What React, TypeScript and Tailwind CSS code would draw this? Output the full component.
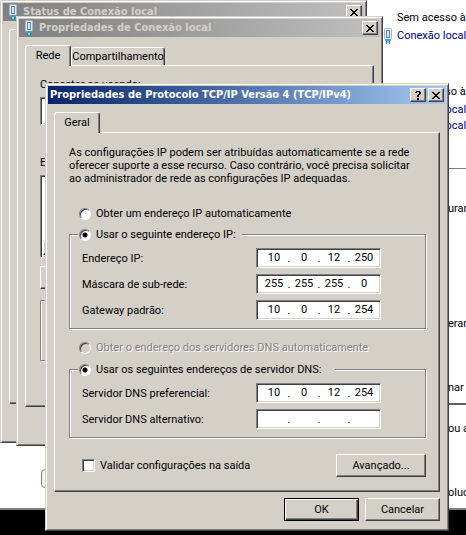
import type { ReactNode } from "react";

const raised =
  "border border-t-[#d4d0c8] border-l-[#d4d0c8] border-r-[#404040] border-b-[#404040] shadow-[inset_1px_1px_0_#ffffff,inset_-1px_-1px_0_#808080]";
const raisedButton =
  "border border-t-white border-l-white border-r-[#404040] border-b-[#404040] shadow-[inset_-1px_-1px_0_#808080] bg-[#d4d0c8]";
const sunken =
  "border border-t-[#808080] border-l-[#808080] border-r-white border-b-white shadow-[inset_1px_1px_0_#404040,inset_-1px_-1px_0_#d4d0c8] bg-white";
const etched =
  "border border-[#808080] shadow-[1px_1px_0_#ffffff,inset_1px_1px_0_#ffffff]";

function PlugIcon() {
  return (
    <svg width="10" height="16" viewBox="0 0 10 16" aria-hidden="true" className="shrink-0">
      <rect x="1.5" y="0.5" width="7" height="11" rx="1" fill="#eaf2fb" stroke="#a3b4cd" />
      <rect x="3.5" y="2.5" width="3" height="7" fill="#ffffff" stroke="#5d7bab" />
      <path d="M5 3v6" stroke="#b9cdea" />
      <path d="M2 11h6v2H2z" fill="#35a9cf" />
      <path d="M3 13h1v3H3zM6 13h1v3H6z" fill="#2789ad" />
      <path d="M4 13h2v2H4z" fill="#7ed3e8" />
    </svg>
  );
}

function CaptionButton({ label, kind }: { label: string; kind: "close" | "help" }) {
  return (
    <button
      type="button"
      aria-label={label}
      className={`flex h-[14px] w-4 shrink-0 items-center justify-center ${raisedButton}`}
    >
      {kind === "close" ? (
        <svg width="8" height="7" viewBox="0 0 8 7" shapeRendering="crispEdges" aria-hidden="true">
          <path
            d="M0 0h2v1H0zM6 0h2v1H6zM1 1h2v1H1zM5 1h2v1H5zM2 2h4v1H2zM3 3h2v1H3zM2 4h4v1H2zM1 5h2v1H1zM5 5h2v1H5zM0 6h2v1H0zM6 6h2v1H6z"
            fill="#000"
          />
        </svg>
      ) : (
        <svg width="6" height="9" viewBox="0 0 6 9" shapeRendering="crispEdges" aria-hidden="true">
          <path d="M1 0h4v1H1zM0 1h2v1H0zM4 1h2v2H4zM3 3h2v1H3zM2 4h2v2H2zM2 7h2v2H2z" fill="#000" />
        </svg>
      )}
    </button>
  );
}

type WindowProps = {
  title: string;
  active?: boolean;
  place: string;
  children: ReactNode;
};

function Window({ title, active = false, place, children }: WindowProps) {
  return (
    <section aria-label={title} className={`absolute flex flex-col bg-[#d4d0c8] p-[2px] ${raised} ${place}`}>
      <header
        className={`flex h-[18px] shrink-0 items-center gap-[2px] bg-linear-to-r px-[2px] ${
          active ? "from-[#0a246a] to-[#a6caf0] text-white" : "from-[#808080] to-[#c0c0c0] text-[#d4d0c8]"
        }`}
      >
        {!active && (
          <span className="flex w-4 justify-center">
            <PlugIcon />
          </span>
        )}
        <h1 className="min-w-0 flex-1 whitespace-nowrap font-['DejaVu_Sans_Condensed','DejaVu_Sans',sans-serif] text-[11px] leading-[14px] font-bold">{title}</h1>
        <div className="flex">
          {active && <CaptionButton label="Ajuda" kind="help" />}
          {active && <span className="w-[2px]" />}
          <CaptionButton label="Fechar" kind="close" />
        </div>
      </header>
      {children}
    </section>
  );
}

function Tab({ label, selected = false, size }: { label: string; selected?: boolean; size: string }) {
  return (
    <button
      type="button"
      role="tab"
      aria-selected={selected}
      className={`rounded-t-[3px] border border-b-0 border-t-white border-l-white border-r-[#404040] bg-[#d4d0c8] text-center whitespace-nowrap shadow-[inset_-1px_0_0_#808080] ${
        selected ? "relative -mb-px h-[21px] pb-px" : "h-[18px]"
      } ${size}`}
    >
      {label}
    </button>
  );
}

const tabPage =
  "border border-t-white border-l-white border-r-[#404040] border-b-[#404040] shadow-[inset_-1px_-1px_0_#808080]";

const radio =
  "m-0 size-3 shrink-0 appearance-none rounded-full border border-t-[#808080] border-l-[#808080] border-r-white border-b-white shadow-[inset_1px_1px_0_#404040]";

type RadioProps = { id: string; name: string; label: string; checked?: boolean; disabled?: boolean };

function Radio({ id, name, label, checked = false, disabled = false }: RadioProps) {
  return (
    <div className="flex h-[13px] items-center gap-[5px]">
      <input
        id={id}
        name={name}
        type="radio"
        defaultChecked={checked}
        disabled={disabled}
        className={`${radio} ${
          disabled
            ? "bg-[#d4d0c8]"
            : "bg-white checked:bg-[radial-gradient(circle,#000_2px,#fff_3px)]"
        }`}
      />
      <label
        htmlFor={id}
        className={`whitespace-nowrap ${disabled ? "text-[#808080] [text-shadow:1px_1px_0_#fff]" : ""}`}
      >
        {label}
      </label>
    </div>
  );
}

function AddressField({ id, label, parts }: { id: string; label: string; parts: string[] }) {
  return (
    <div className="flex items-center">
      <label htmlFor={`${id}-0`} className="w-[174px] whitespace-nowrap">
        {label}
      </label>
      <div className={`flex h-5 w-[125px] items-center pl-1 ${sunken}`}>
        {parts.map((part, i) => (
          <span key={i} className="flex items-center">
            {i > 0 && <span className="w-1 text-center">.</span>}
            <input
              id={`${id}-${i}`}
              aria-label={i > 0 ? `${label} ${i + 1}` : undefined}
              defaultValue={part}
              className="w-[26px] bg-transparent p-0 text-center leading-[14px] outline-none"
            />
          </span>
        ))}
      </div>
    </div>
  );
}

function Backdrop() {
  return (
    <div className="flex h-[510px] flex-col overflow-hidden border-b-2 border-[#808080] bg-white whitespace-nowrap">
      <div className="h-[169px] shrink-0 border-b border-[#808080] pt-[10px] pl-[397px] leading-4">
        <p>Sem acesso à Internet</p>
        <p className="-ml-[14px] flex items-center gap-1 pt-[2px]">
          <PlugIcon />
          <a href="#conexao" className="text-[#000080]">Conexão local</a>
        </p>
        <p className="pt-10">Sem acesso à Internet</p>
        <a href="#conexao-2" className="block pt-[2px] text-[#000080]">Conexão local</a>
        <a href="#conexao-3" className="block text-[#000080]">Conexão local</a>
      </div>
      <div className="flex h-[236px] shrink-0 flex-col border-b-2 border-[#606060] pt-8 pl-[448px] leading-4">
        <p>uran</p>
        <p className="pt-[99px]">erar</p>
        <p className="pt-12">nar p</p>
      </div>
      <div className="flex flex-1 leading-4">
        <span className="mt-16 ml-[41px] h-[19px] w-6 shrink-0 rounded-sm border border-[#808080] bg-[#f4f4f4]" />
        <div className="ml-[383px] pt-4">
          <p>ou al</p>
          <p className="pt-12">oluci</p>
        </div>
      </div>
    </div>
  );
}

export default function App() {
  return (
    <main className="relative min-h-screen overflow-hidden bg-black font-[Roboto,sans-serif] text-[11px] leading-[13px] text-black">
      <Backdrop />

      <Window title="Status de Conexão local" place="top-0 left-0 h-[443px] w-[367px]">
        <div className={`mx-[6px] mt-2 h-[375px] rounded-tl-[3px] ${tabPage}`} />
      </Window>

      <Window title="Propriedades de Conexão local" place="top-4 left-4 h-[430px] w-[367px]">
        <div className="mx-[6px] mt-2 flex items-end" role="tablist">
          <Tab label="Rede" selected size="w-[46px]" />
          <Tab label="Compartilhamento" size="w-[94px]" />
        </div>
        <div className={`mx-[6px] h-[342px] px-[14px] pt-3 ${tabPage}`}>
          <p>Conectar-se usando:</p>
          <div className={`mt-[6px] h-7 ${sunken}`} />
          <p className="mt-[31px]">Esta conexão usa estes itens:</p>
          <div className={`mt-[6px] flex h-[83px] flex-col justify-end p-[2px] ${sunken}`}>
            <div className={`h-[14px] ${raisedButton}`} />
          </div>
          <button type="button" aria-label="Instalar" className={`mt-2 block h-[23px] w-[90px] ${raisedButton}`} />
          <div className={`mt-[11px] h-[61px] ${etched}`} />
        </div>
      </Window>

      <Window
        title="Propriedades de Protocolo TCP/IP Versão 4 (TCP/IPv4)"
        active
        place="top-[83px] left-[45px] w-[404px]"
      >
        <div className="mx-[6px] mt-2 flex items-end" role="tablist">
          <Tab label="Geral" selected size="w-[46px]" />
        </div>
        <form className={`mx-[6px] pt-[13px] pr-[13px] pb-[14px] pl-[14px] ${tabPage}`}>
          <p className="whitespace-nowrap">
            As configurações IP podem ser atribuídas automaticamente se a rede
            <br />
            oferecer suporte a esse recurso. Caso contrário, você precisa solicitar
            <br />
            ao administrador de rede as configurações IP adequadas.
          </p>

          <div className="mt-[22px] ml-[10px]">
            <Radio id="ip-auto" name="ip" label="Obter um endereço IP automaticamente" />
          </div>
          <fieldset className={`mt-2 px-3 pb-2 ${etched}`}>
            <legend className="-ml-1 bg-[#d4d0c8] pr-[6px] pl-px">
              <Radio id="ip-manual" name="ip" label="Usar o seguinte endereço IP:" checked />
            </legend>
            <div className="mt-[7px] flex flex-col gap-[6px]">
              <AddressField id="ip" label="Endereço IP:" parts={["10", "0", "12", "250"]} />
              <AddressField id="mask" label="Máscara de sub-rede:" parts={["255", "255", "255", "0"]} />
              <AddressField id="gateway" label="Gateway padrão:" parts={["10", "0", "12", "254"]} />
            </div>
          </fieldset>

          <div className="mt-3 ml-[10px]">
            <Radio id="dns-auto" name="dns" label="Obter o endereço dos servidores DNS automaticamente" disabled />
          </div>
          <fieldset className={`mt-[9px] px-3 pb-2 ${etched}`}>
            <legend className="-ml-1 bg-[#d4d0c8] pr-[14px] pl-px">
              <Radio id="dns-manual" name="dns" label="Usar os seguintes endereços de servidor DNS:" checked />
            </legend>
            <div className="mt-[7px] flex flex-col gap-[6px]">
              <AddressField id="dns1" label="Servidor DNS preferencial:" parts={["10", "0", "12", "254"]} />
              <AddressField id="dns2" label="Servidor DNS alternativo:" parts={["", "", "", ""]} />
            </div>
          </fieldset>

          <div className="mt-4 flex items-center justify-between pl-[13px]">
            <div className="flex items-center gap-[5px]">
              <input
                id="validate"
                type="checkbox"
                className={`m-0 size-[13px] appearance-none checked:bg-black ${sunken}`}
              />
              <label htmlFor="validate">Validar configurações na saída</label>
            </div>
            <button type="button" className={`h-[23px] w-[90px] ${raisedButton}`}>
              Avançado...
            </button>
          </div>
        </form>
        <footer className="flex justify-end gap-[6px] px-[6px] pt-[6px] pb-[7px]">
          <button type="button" className="h-[23px] w-[75px] border border-black bg-[#d4d0c8] shadow-[inset_1px_1px_0_#ffffff,inset_-1px_-1px_0_#404040,inset_-2px_-2px_0_#808080]">
            OK
          </button>
          <button type="button" className={`h-[23px] w-[75px] ${raisedButton}`}>
            Cancelar
          </button>
        </footer>
      </Window>
    </main>
  );
}
